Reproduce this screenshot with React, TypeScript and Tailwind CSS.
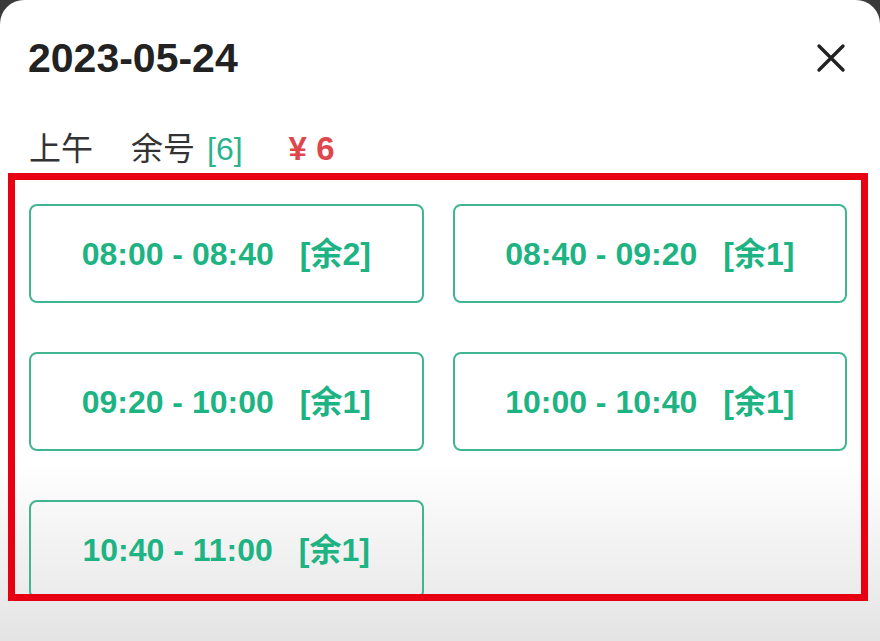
import React from 'react';

const slots = [
  { time: '08:00 - 08:40', left: 2 },
  { time: '08:40 - 09:20', left: 1 },
  { time: '09:20 - 10:00', left: 1 },
  { time: '10:00 - 10:40', left: 1 },
  { time: '10:40 - 11:00', left: 1 },
];

const font = { fontFamily: '"Liberation Sans", "Noto Sans CJK SC", sans-serif' };

const CloseIcon = () => (
  <svg width="30" height="30" viewBox="0 0 30 30" fill="none">
    <path d="M3 3 L27 27 M27 3 L3 27" stroke="#222" strokeWidth="3.4" strokeLinecap="round" />
  </svg>
);

export default function App() {
  return (
    <div className="w-[880px] h-[641px] bg-[#3a3a3a] overflow-hidden" style={font}>
      <div className="h-full rounded-t-[24px] bg-[linear-gradient(to_bottom,#ffffff_72%,#e4e4e4)]">
        {/* header */}
        <div className="flex items-center justify-between pl-[28px] pr-[34px] pt-[34px]">
          <h1 className="text-[41px] leading-[48px] font-bold text-[#222]">2023-05-24</h1>
          <CloseIcon />
        </div>

        {/* session info */}
        <div className="flex items-center mt-[47px] pl-[29px] h-[40px] text-[32px] leading-[40px] text-[#333]">
          <span>上午</span>
          <span className="ml-[38px]">余号</span>
          <span className="ml-[12px] text-[#2bb38f]">[6]</span>
          <span className="ml-[46px] font-bold text-[33px] text-[#e0474c]">¥ 6</span>
        </div>

        {/* slot grid */}
        <div className="ml-[8px] mr-[12px] mt-[4px] h-[428px] border-[7px] border-[#e60012] overflow-hidden px-[14px] pt-[24px]">
          <div className="grid grid-cols-2 gap-x-[29px] gap-y-[49px]">
            {slots.map((s) => (
              <button
                key={s.time}
                className="h-[99px] rounded-[8px] border-2 border-[#3fb592] flex items-center justify-center text-[32px] font-bold text-[#1db383]"
              >
                <span>{s.time}</span>
                <span className="ml-[26px]">[余{s.left}]</span>
              </button>
            ))}
          </div>
        </div>
      </div>
    </div>
  );
}
